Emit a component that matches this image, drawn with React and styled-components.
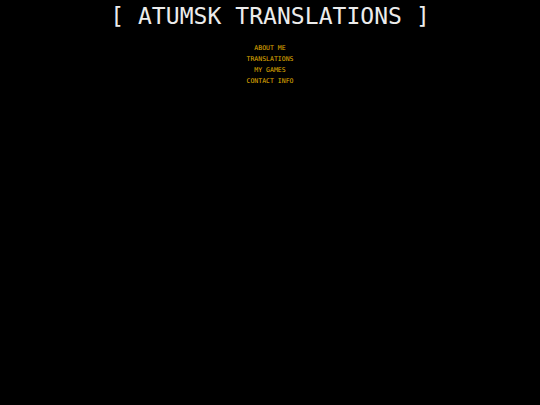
import React from "react";
import styled, { createGlobalStyle } from "styled-components";

const Global = createGlobalStyle`
  html, body { margin: 0; padding: 0; background: #000; }
  body { font-family: "DejaVu Sans Mono", "Liberation Mono", monospace; }
`;

const Page = styled.div`
  min-height: 405px;
  background: #000;
  display: flex;
  flex-direction: column;
  align-items: center;
  padding-top: 5px;
  box-sizing: border-box;
`;

const Title = styled.h1`
  margin: 0;
  font-family: "DejaVu Sans Mono", monospace;
  font-weight: normal;
  font-size: 23px;
  line-height: 23px;
  color: #ececec;
  letter-spacing: 0.05px;
  white-space: pre;
`;

const Nav = styled.nav`
  margin-top: 15px;
  display: flex;
  flex-direction: column;
  align-items: center;
`;

const NavLink = styled.a`
  font-family: "DejaVu Sans Mono", monospace;
  font-size: 6.5px;
  line-height: 11px;
  color: #e0b000;
  text-decoration: none;
  white-space: pre;
`;

const links = ["ABOUT ME", "TRANSLATIONS", "MY GAMES", "CONTACT INFO"];

export default function App() {
  return (
    <>
      <Global />
      <Page>
        <Title>[ ATUMSK TRANSLATIONS ]</Title>
        <Nav>
          {links.map((l) => (
            <NavLink key={l} href="#">{l}</NavLink>
          ))}
        </Nav>
      </Page>
    </>
  );
}
